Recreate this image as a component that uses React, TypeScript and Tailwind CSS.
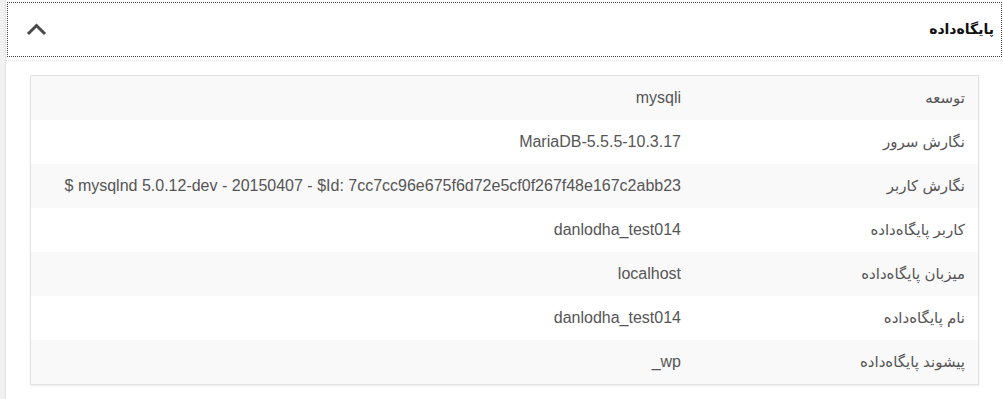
import React from "react";

const rows: [string, string][] = [
  ["توسعه", "mysqli"],
  ["نگارش سرور", "MariaDB-5.5.5-10.3.17"],
  ["نگارش کاربر", "$ mysqlnd 5.0.12-dev - 20150407 - $Id: 7cc7cc96e675f6d72e5cf0f267f48e167c2abb23"],
  ["کاربر پایگاه‌داده", "danlodha_test014"],
  ["میزبان پایگاه‌داده", "localhost"],
  ["نام پایگاه‌داده", "danlodha_test014"],
  ["پیشوند پایگاه‌داده", "_wp"],
];

export default function App() {
  return (
    <div
      className="flex h-[399px] w-[1003px] bg-white overflow-hidden"
      style={{ fontFamily: '"Liberation Sans", "DejaVu Sans", sans-serif' }}
    >
      <div className="w-[6px] shrink-0 bg-[#f1f1f1] border-r border-[#e2e2e2]" />
      <div className="flex-1 flex flex-col">
        <div className="mt-[2px] ml-[1px] mr-[1px] h-[55px] border border-dotted border-[#444] flex items-center justify-between px-[18px]">
          <svg width="21" height="13" viewBox="0 0 21 13" className="mt-[-1px]">
            <path d="M2 11 L10.5 2.5 L19 11" fill="none" stroke="#4a4a4a" strokeWidth="3" />
          </svg>
          <div dir="rtl" className="text-[14px] font-bold text-[#111] mr-[-11px] mt-[-1px]">
            پایگاه‌داده
          </div>
        </div>
        <div className="mt-[3px] border-t border-dotted border-[#d8d8d8]" />
        <div className="mt-[14px] mx-[24px] border border-[#e2e2e2] shadow-[0_1px_2px_rgba(0,0,0,0.08)]">
          {rows.map(([k, v], i) => (
            <div
              key={i}
              dir="rtl"
              className={`flex h-[44px] items-center ${i % 2 === 0 ? "bg-[#f9f9f9]" : "bg-white"}`}
            >
              <div className="w-[285px] shrink-0 pr-[13px] text-[15px] text-[#555]">{k}</div>
              <div className="flex-1 pr-[12px] text-[16px] text-[#555]" dir="rtl">
                <span dir="ltr">{v}</span>
              </div>
            </div>
          ))}
        </div>
      </div>
    </div>
  );
}
